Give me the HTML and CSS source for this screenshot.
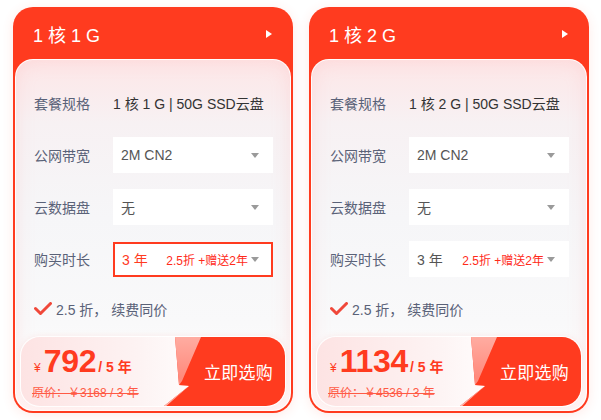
FILE: index.html
```html
<!DOCTYPE html>
<html lang="zh-CN">
<head>
<meta charset="utf-8">
<link rel="stylesheet" href="styles.css">
</head>
<body>
<div class="wrap">
  <div class="card">
    <div class="card-head">
      <span class="title">1 核 1 G</span>
      <span class="arrow"></span>
    </div>
    <div class="panel">
      <div class="row">
        <span class="label">套餐规格</span>
        <span class="value">1 核 1 G | 50G SSD云盘</span>
      </div>
      <div class="row">
        <span class="label">公网带宽</span>
        <div class="select"><span class="sel-text">2M CN2</span><span class="caret"></span></div>
      </div>
      <div class="row">
        <span class="label">云数据盘</span>
        <div class="select"><span class="sel-text">无</span><span class="caret"></span></div>
      </div>
      <div class="row">
        <span class="label">购买时长</span>
        <div class="select active"><span class="sel-text">3 年</span><span class="promo">2.5折 +赠送2年</span><span class="caret"></span></div>
      </div>
      <div class="note">
        <svg class="check" width="18" height="14" viewBox="0 0 18 14"><path d="M1.5 6.5 L6.5 11.5 L16.5 1.5" fill="none" stroke="#f0483a" stroke-width="3" stroke-linecap="round" stroke-linejoin="round"/></svg>
        <span>2.5 折， 续费同价</span>
      </div>
      <div class="pricebox">
        <div class="price">
          <div class="now"><span class="yen">¥</span><span class="num">792</span><span class="per">/ 5 年</span></div>
          <div class="old">原价：￥3168 / 3 年</div>
        </div>
        <div class="buy"><span class="shine"></span><span class="buy-text">立即选购</span></div>
      </div>
    </div>
  </div>
  <div class="card">
    <div class="card-head">
      <span class="title">1 核 2 G</span>
      <span class="arrow"></span>
    </div>
    <div class="panel">
      <div class="row">
        <span class="label">套餐规格</span>
        <span class="value">1 核 2 G | 50G SSD云盘</span>
      </div>
      <div class="row">
        <span class="label">公网带宽</span>
        <div class="select"><span class="sel-text">2M CN2</span><span class="caret"></span></div>
      </div>
      <div class="row">
        <span class="label">云数据盘</span>
        <div class="select"><span class="sel-text">无</span><span class="caret"></span></div>
      </div>
      <div class="row">
        <span class="label">购买时长</span>
        <div class="select"><span class="sel-text">3 年</span><span class="promo">2.5折 +赠送2年</span><span class="caret"></span></div>
      </div>
      <div class="note">
        <svg class="check" width="18" height="14" viewBox="0 0 18 14"><path d="M1.5 6.5 L6.5 11.5 L16.5 1.5" fill="none" stroke="#f0483a" stroke-width="3" stroke-linecap="round" stroke-linejoin="round"/></svg>
        <span>2.5 折， 续费同价</span>
      </div>
      <div class="pricebox">
        <div class="price">
          <div class="now"><span class="yen">¥</span><span class="num">1134</span><span class="per">/ 5 年</span></div>
          <div class="old">原价：￥4536 / 3 年</div>
        </div>
        <div class="buy"><span class="shine"></span><span class="buy-text">立即选购</span></div>
      </div>
    </div>
  </div>
</div>
</body>
</html>
```
FILE: styles.css
```css
* { box-sizing: border-box; }
html, body { margin: 0; padding: 0; background: #fff; }
body {
  font-family: "Liberation Sans", "Noto Sans CJK SC", sans-serif;
  width: 601px;
  height: 420px;
  overflow: hidden;
}
.wrap {
  display: flex;
  gap: 16px;
  padding: 7px 0 0 13px;
}
.card {
  width: 280px;
  height: 406px;
  background: #ff3b1f;
  border-radius: 20px;
  display: flex;
  flex-direction: column;
  box-shadow: 0 2px 12px rgba(255, 80, 60, 0.12);
}
.card-head {
  height: 52px;
  display: flex;
  align-items: center;
  justify-content: space-between;
  padding: 2px 20px 0 20px;
}
.title {
  color: #fff;
  font-size: 18px;
}
.arrow {
  width: 0;
  height: 0;
  border-top: 4.5px solid transparent;
  border-bottom: 4.5px solid transparent;
  border-left: 6px solid #fff;
  margin-right: 1px;
}
.panel {
  flex: 1;
  margin: 0 2px 2px 2px;
  border: 1px solid rgba(255, 255, 255, 0.85);
  border-radius: 18px;
  background:
    linear-gradient(180deg, #fde6e7 0%, #f7f1f3 18%, #f6f6f8 45%, #f9f9fa 75%, #fff 100%);
  box-shadow: inset 0 0 18px rgba(255, 170, 170, 0.25);
  padding: 25px 17px 0 17px;
  display: flex;
  flex-direction: column;
}
.row {
  display: flex;
  align-items: center;
  height: 36px;
  margin-bottom: 16px;
}
.label {
  width: 80px;
  font-size: 14px;
  color: #5a6278;
  padding-left: 1px;
}
.value {
  font-size: 14px;
  color: #333;
}
.select {
  width: 160px;
  height: 36px;
  background: #fff;
  display: flex;
  align-items: center;
  padding: 0 14px 0 8px;
  font-size: 14px;
  color: #555;
}
.select.active {
  border: 2px solid #ff3b1f;
  padding-left: 7px;
  padding-right: 12px;
  height: 35px;
}
.select.active .sel-text { color: #ff3b1f; }
.sel-text { flex: 1; }
.promo {
  font-size: 12px;
  color: #ff2a1a;
  margin-right: 3px;
}
.caret {
  width: 0;
  height: 0;
  border-left: 4.5px solid transparent;
  border-right: 4.5px solid transparent;
  border-top: 5px solid #9a9a9a;
}
.note {
  display: flex;
  align-items: center;
  gap: 4px;
  font-size: 14px;
  color: #5a6278;
  margin-top: 7px;
  padding-left: 1px;
  height: 18px;
}
.pricebox {
  margin: 18px -13px 0 -13px;
  height: 71px;
  border-radius: 20px;
  overflow: hidden;
  display: flex;
  background: linear-gradient(90deg, #fde3e3 0%, #fdf3f3 45%, #fff 70%);
  border: 1px solid rgba(255, 255, 255, 0.9);
  box-shadow: 0 0 6px rgba(255, 120, 110, 0.12);
}
.price {
  flex: 1;
  padding: 6px 0 0 13px;
}
.now {
  display: flex;
  align-items: baseline;
  color: #ff3b1f;
  height: 37px;
}
.yen { font-size: 12px; margin-right: 3px; }
.num { font-size: 32px; font-weight: bold; letter-spacing: -0.3px; }
.per { font-size: 14px; font-weight: bold; margin-left: 2px; }
.old {
  font-size: 12px;
  color: #ff5a45;
  text-decoration: line-through;
  margin-top: 3px;
  margin-left: -2px;
}
.buy {
  position: relative;
  width: 121px;
  height: 100%;
  background: #ff3b1f;
  clip-path: polygon(11px 0, 100% 0, 100% 100%, 0 100%, 25px 49px, 15px 48px);
  display: flex;
  align-items: center;
  justify-content: center;
  padding-left: 28px;
}
.shine {
  position: absolute;
  left: 0;
  top: 0;
  width: 40px;
  height: 100%;
  background: linear-gradient(180deg, #ffb2a8 0%, #ff8d80 60%, #ffc1b9 100%);
  clip-path: polygon(11px 0, 37px 0, 18px 44px, 15px 48px, 25px 49px, 0 71px);
  opacity: 0.95;
}
.buy-text {
  position: relative;
  color: #fff;
  font-size: 17px;
  letter-spacing: 0.3px;
}
```
